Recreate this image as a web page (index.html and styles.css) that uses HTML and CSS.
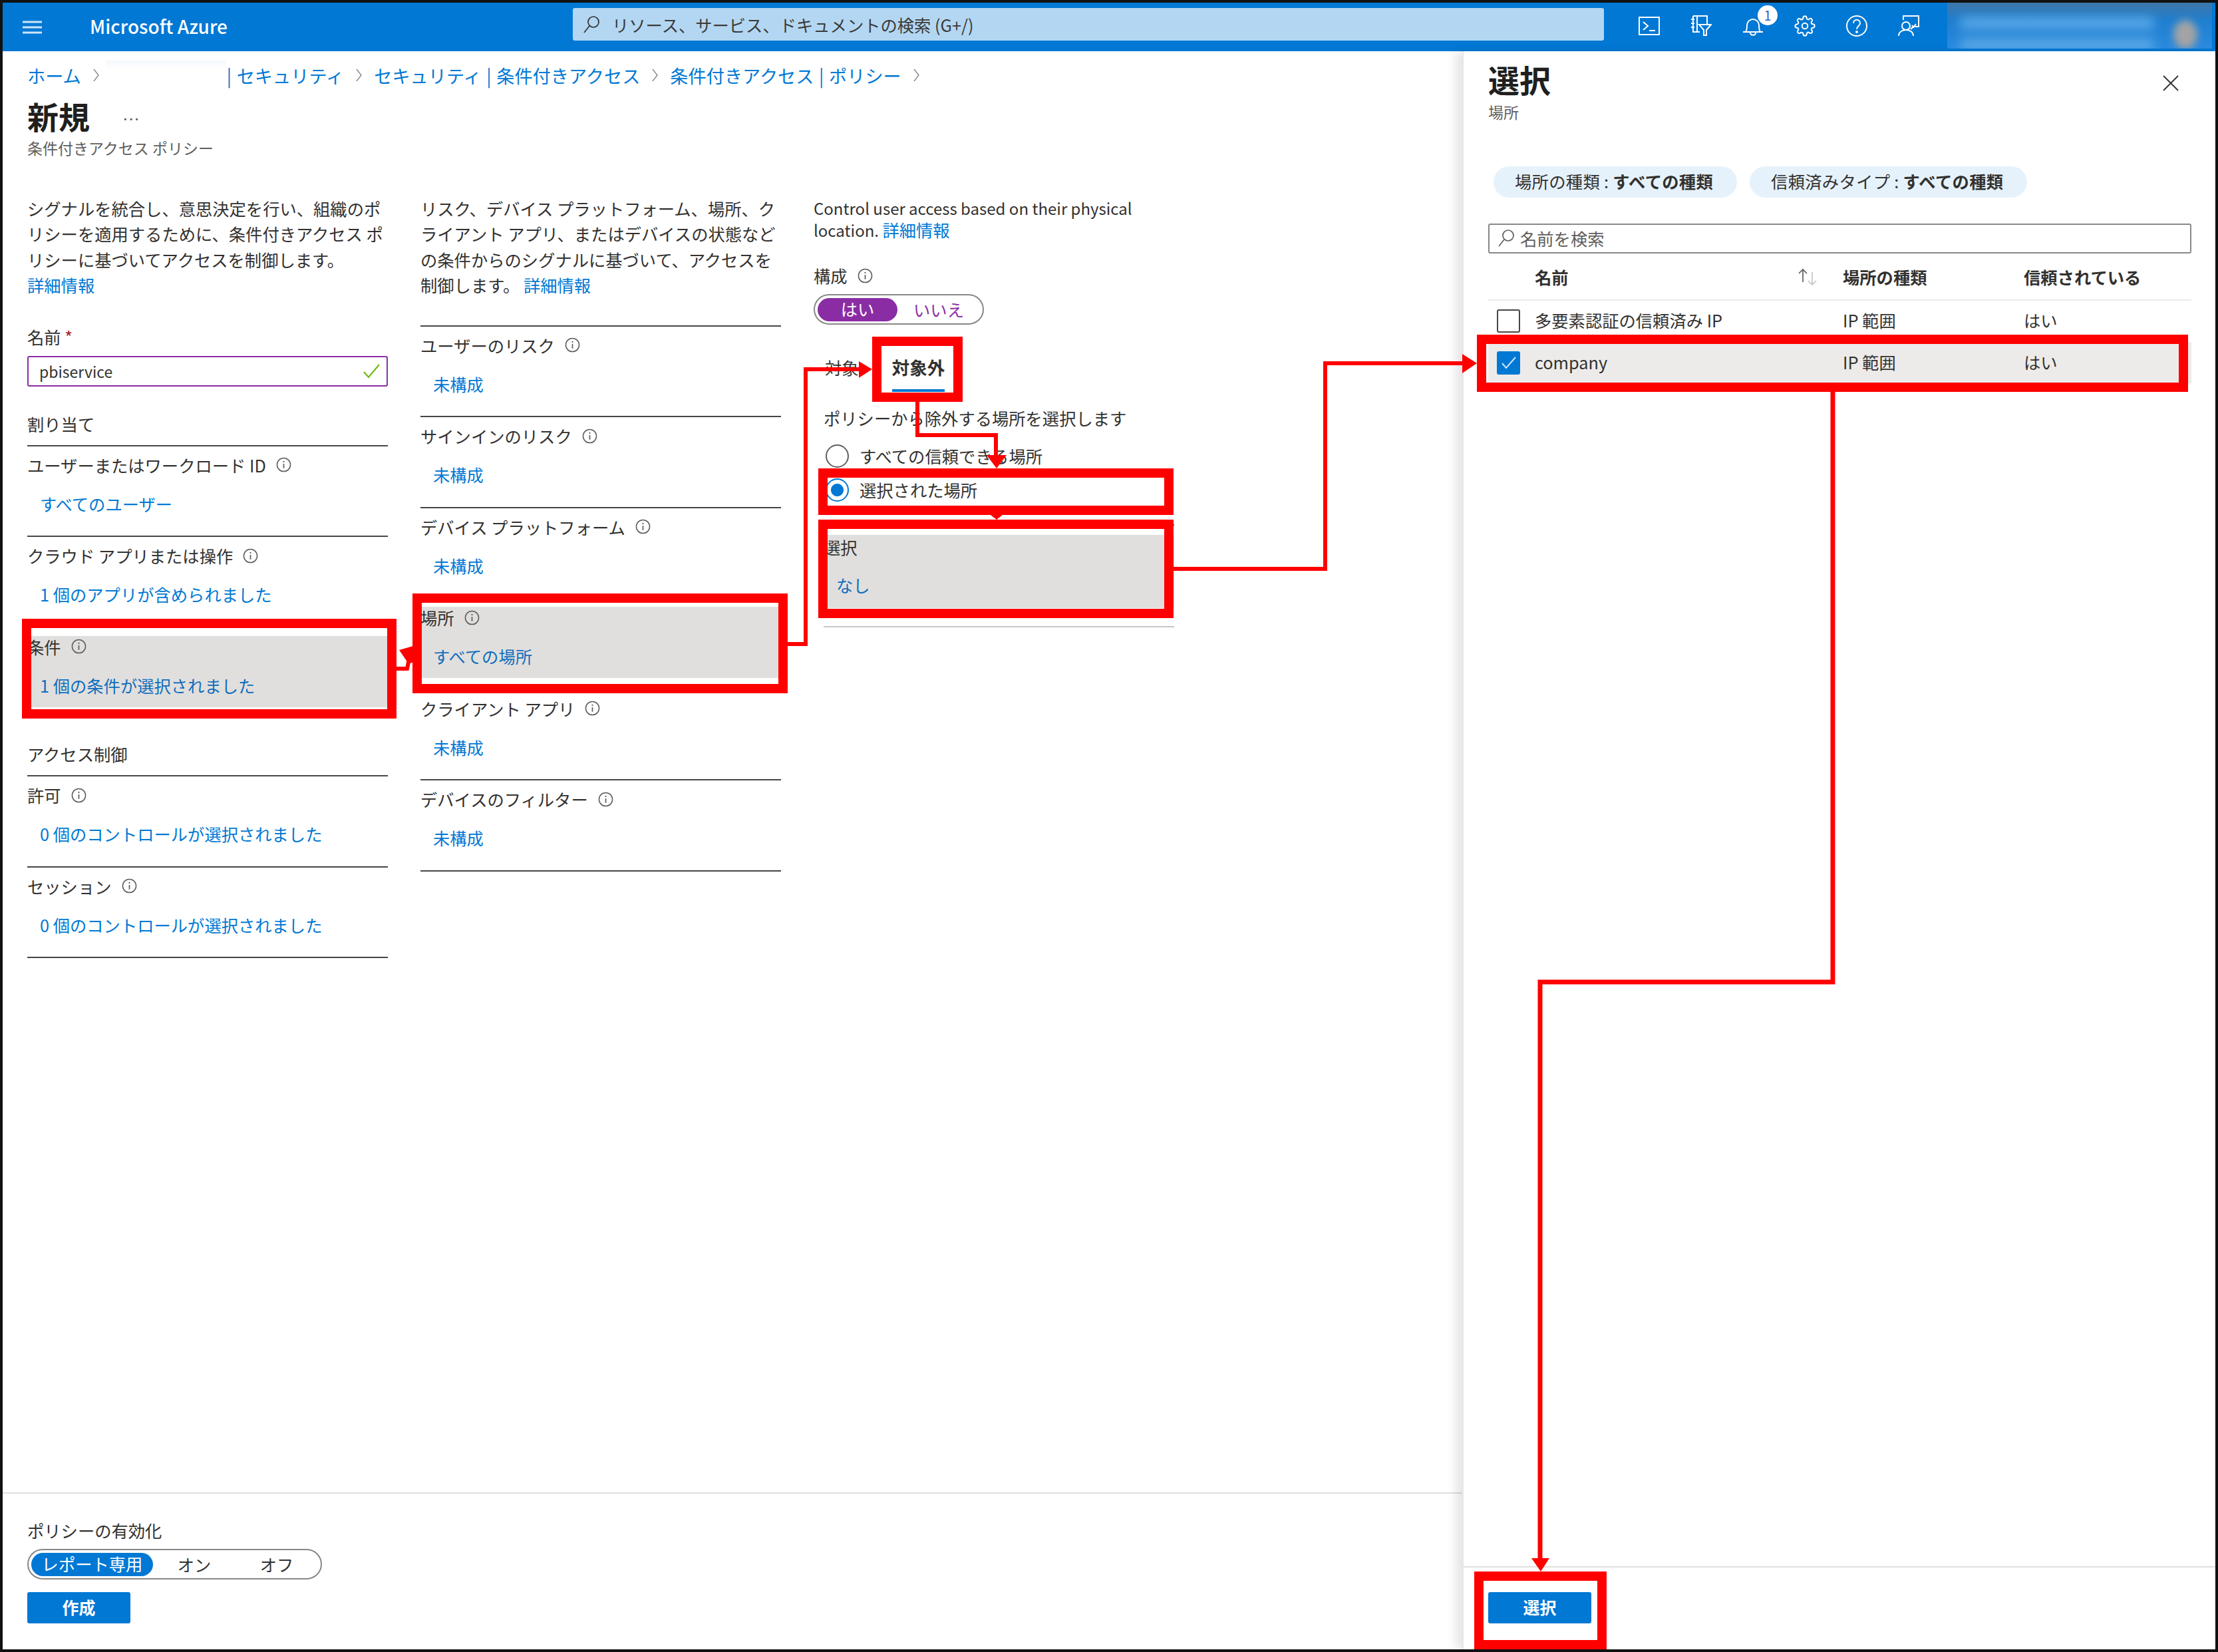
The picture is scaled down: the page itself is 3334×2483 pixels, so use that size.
FILE: index.html
```html
<!DOCTYPE html>
<html lang="ja">
<head>
    <meta charset="UTF-8">
    <title>新規 - Microsoft Azure</title>
    <link rel="stylesheet" href="styles.css">
</head>
<body>
    <svg class="defs" width="0" height="0">
        <symbol id="info" viewBox="0 0 24 24">
            <circle cx="12" cy="12" r="10.5" fill="none" stroke="currentColor" stroke-width="1.6"/>
            <path d="M12 10.5v7" stroke="currentColor" stroke-width="1.8"/>
            <circle cx="12" cy="7.2" r="1.2" fill="currentColor"/>
        </symbol>
        <symbol id="chev" viewBox="0 0 11 22">
            <path d="M2 2l7 9-7 9" fill="none" stroke="currentColor" stroke-width="1.4"/>
        </symbol>
    </svg>

    <div class="frame">
        <!-- Top bar -->
        <header class="topbar">
            <svg class="burger" width="29" height="20" viewBox="0 0 29 20">
                <path d="M0 2h29M0 10h29M0 18h29" stroke="#cfe4f7" stroke-width="3"/>
            </svg>
            <div class="brand">Microsoft Azure</div>
            <div class="global-search">
                <svg width="26" height="28" viewBox="0 0 26 28">
                    <circle cx="16" cy="10" r="8" fill="none" stroke="#323130" stroke-width="1.7"/>
                    <path d="M10 16L2 26" stroke="#323130" stroke-width="1.7"/>
                </svg>
                <span>リソース、サービス、ドキュメントの検索 (G+/)</span>
            </div>
            <div class="top-icons">
                <div class="top-icon">
                    <svg width="32" height="28" viewBox="0 0 32 28" fill="none" stroke="#fff" stroke-width="2">
                        <rect x="1" y="1" width="30" height="26"/>
                        <path d="M7 8l7 6-7 6M16 21h9"/>
                    </svg>
                </div>
                <div class="top-icon">
                    <svg width="32" height="32" viewBox="0 0 32 32" fill="none" stroke="#fff" stroke-width="2">
                        <path d="M4 1h21v12M14 25H4V1M10 1v24M1 6h5M1 12h5M1 18h5"/>
                        <path d="M13 14h18l-7 8v8h-4v-8z"/>
                    </svg>
                </div>
                <div class="top-icon">
                    <svg width="32" height="30" viewBox="0 0 32 30" fill="none" stroke="#fff" stroke-width="2">
                        <path d="M5 24c2-3 2-6 2-10 0-5 4-9 9-9s9 4 9 9c0 4 0 7 2 10zM1 24h30M12 25c0 5 8 5 8 0"/>
                    </svg>
                    <span class="badge">1</span>
                </div>
                <div class="top-icon">
                    <svg width="32" height="32" viewBox="0 0 24 24" fill="none" stroke="#fff" stroke-width="1.5">
                        <circle cx="12" cy="12" r="3.2"/>
                        <path d="M19.4 15a1.65 1.65 0 0 0 .33 1.82l.06.06a2 2 0 0 1 0 2.83 2 2 0 0 1-2.83 0l-.06-.06a1.65 1.65 0 0 0-1.82-.33 1.65 1.65 0 0 0-1 1.51V21a2 2 0 0 1-2 2 2 2 0 0 1-2-2v-.09A1.65 1.65 0 0 0 9 19.4a1.65 1.65 0 0 0-1.82.33l-.06.06a2 2 0 0 1-2.83 0 2 2 0 0 1 0-2.83l.06-.06a1.65 1.65 0 0 0 .33-1.82 1.65 1.65 0 0 0-1.51-1H3a2 2 0 0 1-2-2 2 2 0 0 1 2-2h.09A1.65 1.65 0 0 0 4.6 9a1.65 1.65 0 0 0-.33-1.82l-.06-.06a2 2 0 0 1 0-2.83 2 2 0 0 1 2.83 0l.06.06a1.65 1.65 0 0 0 1.82.33H9a1.65 1.65 0 0 0 1-1.51V3a2 2 0 0 1 2-2 2 2 0 0 1 2 2v.09a1.65 1.65 0 0 0 1 1.51 1.65 1.65 0 0 0 1.82-.33l.06-.06a2 2 0 0 1 2.83 0 2 2 0 0 1 0 2.83l-.06.06a1.65 1.65 0 0 0-.33 1.82V9a1.65 1.65 0 0 0 1.51 1H21a2 2 0 0 1 2 2 2 2 0 0 1-2 2h-.09a1.65 1.65 0 0 0-1.51 1z"/>
                    </svg>
                </div>
                <div class="top-icon">
                    <svg width="32" height="32" viewBox="0 0 32 32" fill="none" stroke="#fff" stroke-width="2">
                        <circle cx="16" cy="16" r="15"/>
                        <path d="M11 12c0-7 10-7 10 0 0 4-5 4-5 9"/>
                        <circle cx="16" cy="25" r="1" fill="#fff"/>
                    </svg>
                </div>
                <div class="top-icon">
                    <svg width="32" height="32" viewBox="0 0 32 32" fill="none" stroke="#fff" stroke-width="2">
                        <path d="M8 7V1h23v16h-8l-4 4"/>
                        <circle cx="12" cy="16" r="6"/>
                        <path d="M1 31c0-12 22-12 22 0M21 15l2 3 4-5"/>
                    </svg>
                </div>
            </div>
            <div class="account">
                <div class="account-line one"></div>
                <div class="account-line two"></div>
                <div class="account-pic"></div>
            </div>
        </header>

        <div class="workspace">
            <!-- Policy form -->
            <main class="policy">
                <div class="policy-body">
                    <nav class="crumbs">
                        <a>ホーム</a>
                        <svg class="chev"><use href="#chev"/></svg>
                        <span class="redacted"></span>
                        <a class="after-redact">| セキュリティ</a>
                        <svg class="chev"><use href="#chev"/></svg>
                        <a>セキュリティ | 条件付きアクセス</a>
                        <svg class="chev"><use href="#chev"/></svg>
                        <a>条件付きアクセス | ポリシー</a>
                        <svg class="chev"><use href="#chev"/></svg>
                    </nav>
                    <div class="title-row">
                        <h1>新規</h1>
                        <span class="more">...</span>
                    </div>
                    <div class="subtitle">条件付きアクセス ポリシー</div>

                    <div class="columns">
                        <section class="col">
                            <p class="intro">シグナルを統合し、意思決定を行い、組織のポ<br>リシーを適用するために、条件付きアクセス ポ<br>リシーに基づいてアクセスを制御します。<br><a>詳細情報</a></p>
                            <div class="name-label">名前 <span class="req">*</span></div>
                            <div class="name-input">
                                <span>pbiservice</span>
                                <svg width="25" height="22" viewBox="0 0 25 22"><path d="M1 12l7 8L24 1" fill="none" stroke="#6bb700" stroke-width="2"/></svg>
                            </div>
                            <h2 class="group-title">割り当て</h2>
                            <div class="rows">
                                <div class="row"><div class="row-in"><div class="row-label">ユーザーまたはワークロード ID <svg class="info"><use href="#info"/></svg></div><a class="row-value">すべてのユーザー</a></div></div>
                                <div class="row"><div class="row-in"><div class="row-label">クラウド アプリまたは操作 <svg class="info"><use href="#info"/></svg></div><a class="row-value">1 個のアプリが含められました</a></div></div>
                                <div class="row"><div class="row-in active"><div class="row-label">条件 <svg class="info"><use href="#info"/></svg></div><a class="row-value">1 個の条件が選択されました</a></div></div>
                            </div>
                            <h2 class="group-title access">アクセス制御</h2>
                            <div class="rows">
                                <div class="row"><div class="row-in"><div class="row-label">許可 <svg class="info"><use href="#info"/></svg></div><a class="row-value">0 個のコントロールが選択されました</a></div></div>
                                <div class="row"><div class="row-in"><div class="row-label">セッション <svg class="info"><use href="#info"/></svg></div><a class="row-value">0 個のコントロールが選択されました</a></div></div>
                            </div>
                        </section>

                        <section class="col">
                            <p class="intro">リスク、デバイス プラットフォーム、場所、ク<br>ライアント アプリ、またはデバイスの状態など<br>の条件からのシグナルに基づいて、アクセスを<br>制御します。 <a>詳細情報</a></p>
                            <div class="rows cond-rows">
                                <div class="row"><div class="row-in"><div class="row-label">ユーザーのリスク <svg class="info"><use href="#info"/></svg></div><a class="row-value">未構成</a></div></div>
                                <div class="row"><div class="row-in"><div class="row-label">サインインのリスク <svg class="info"><use href="#info"/></svg></div><a class="row-value">未構成</a></div></div>
                                <div class="row"><div class="row-in"><div class="row-label">デバイス プラットフォーム <svg class="info"><use href="#info"/></svg></div><a class="row-value">未構成</a></div></div>
                                <div class="row"><div class="row-in active"><div class="row-label">場所 <svg class="info"><use href="#info"/></svg></div><a class="row-value">すべての場所</a></div></div>
                                <div class="row"><div class="row-in"><div class="row-label">クライアント アプリ <svg class="info"><use href="#info"/></svg></div><a class="row-value">未構成</a></div></div>
                                <div class="row"><div class="row-in"><div class="row-label">デバイスのフィルター <svg class="info"><use href="#info"/></svg></div><a class="row-value">未構成</a></div></div>
                            </div>
                        </section>

                        <section class="col col-loc">
                            <p class="loc-intro">Control user access based on their physical<br>location. <a>詳細情報</a></p>
                            <div class="row-label cfg-label">構成 <svg class="info"><use href="#info"/></svg></div>
                            <div class="seg seg-cfg">
                                <span class="seg-on purple">はい</span>
                                <span class="seg-off purple-text">いいえ</span>
                            </div>
                            <div class="tabs">
                                <span class="tab">対象</span>
                                <span class="tab current">対象外</span>
                            </div>
                            <div class="tab-body">
                                <p class="tab-hint">ポリシーから除外する場所を選択します</p>
                                <label class="radio"><span class="dot"></span>すべての信頼できる場所</label>
                                <label class="radio"><span class="dot on"></span>選択された場所</label>
                                <div class="pick">
                                    <div class="pick-in">
                                        <div class="row-label">選択</div>
                                        <a class="row-value">なし</a>
                                    </div>
                                </div>
                            </div>
                        </section>
                    </div>
                </div>

                <footer class="policy-foot">
                    <div class="row-label">ポリシーの有効化</div>
                    <div class="seg seg-enable">
                        <span class="seg-on blue">レポート専用</span>
                        <span class="seg-off">オン</span>
                        <span class="seg-off">オフ</span>
                    </div>
                    <button class="btn">作成</button>
                </footer>
            </main>

            <!-- Select blade -->
            <aside class="blade">
                <div class="blade-body">
                    <div class="blade-head">
                        <div>
                            <h1>選択</h1>
                            <div class="blade-sub">場所</div>
                        </div>
                        <svg class="close" width="24" height="24" viewBox="0 0 24 24"><path d="M1 1l22 22M23 1L1 23" stroke="#323130" stroke-width="1.8"/></svg>
                    </div>
                    <div class="chips">
                        <span class="chip">場所の種類 : <b>すべての種類</b></span>
                        <span class="chip">信頼済みタイプ : <b>すべての種類</b></span>
                    </div>
                    <div class="name-search">
                        <svg width="26" height="28" viewBox="0 0 26 28">
                            <circle cx="16" cy="10" r="8" fill="none" stroke="#605e5c" stroke-width="1.7"/>
                            <path d="M10 16L2 26" stroke="#605e5c" stroke-width="1.7"/>
                        </svg>
                        <span>名前を検索</span>
                    </div>
                    <div class="t-row t-head">
                        <span></span>
                        <span class="t-name">名前
                            <svg width="32" height="28" viewBox="0 0 32 28" fill="none" stroke-width="1.7">
                                <path d="M9 22V3M3 9l6-6 6 6" stroke="#605e5c"/>
                                <path d="M23 7v19M17 20l6 6 6-6" stroke="#c8c6c4"/>
                            </svg>
                        </span>
                        <span>場所の種類</span>
                        <span>信頼されている</span>
                    </div>
                    <div class="t-row">
                        <span class="box"></span>
                        <span>多要素認証の信頼済み IP</span>
                        <span>IP 範囲</span>
                        <span>はい</span>
                    </div>
                    <div class="t-row picked">
                        <span class="box checked">
                            <svg width="24" height="20" viewBox="0 0 24 20"><path d="M2 11l6 7L22 2" fill="none" stroke="#cfe4f7" stroke-width="2"/></svg>
                        </span>
                        <span>company</span>
                        <span>IP 範囲</span>
                        <span>はい</span>
                    </div>
                </div>
                <footer class="blade-foot">
                    <button class="btn">選択</button>
                </footer>
            </aside>
        </div>
    </div>

    <!-- Red callouts drawn over the screenshot -->
    <svg class="callouts" width="3334" height="2483" viewBox="0 0 3334 2483" fill="none" stroke="#f00">
        <g stroke-width="14">
            <rect x="40" y="937" width="549" height="136"/>
            <rect x="627" y="899" width="550" height="136"/>
            <rect x="1318" y="513" width="122" height="84"/>
            <rect x="1237" y="711" width="520" height="56"/>
            <rect x="1237" y="788" width="520" height="134"/>
            <rect x="2227" y="510" width="1055" height="72"/>
            <rect x="2223" y="2369" width="185" height="103"/>
        </g>
        <g stroke-width="6">
            <path d="M596 1005h16l4-20"/>
            <path d="M1184 968h27V555h81"/>
            <path d="M1379 604v50h118v32"/>
            <path d="M1764 855h228V546h208"/>
        </g>
        <path d="M2755 589v887h-440v868" stroke-width="7"/>
        <g fill="#f00" stroke="none">
            <path d="M600 977l21-6v24l-4 2-2-7-2 6z"/>
            <path d="M1291 543l20 12-20 13z"/>
            <path d="M1483 684h30l-15 20z"/>
            <path d="M1489 774h18l-9 7z"/>
            <path d="M2198 532l22 14-22 15z"/>
            <path d="M2302 2342h27l-13 20z"/>
        </g>
    </svg>
</body>
</html>
```

FILE: styles.css
```css
* {
    box-sizing: border-box;
}

body {
    margin: 0;
    position: relative;
    width: 3334px;
    height: 2483px;
    overflow: hidden;
    background: #fff;
    color: #323130;
    font-family: "Noto Sans CJK JP", "Noto Sans", sans-serif;
    font-size: 25.3px;
    line-height: 32px;
}

a {
    color: #0078d4;
}

h1, h2, p {
    margin: 0;
    font-weight: 400;
}

.defs {
    position: absolute;
}

.frame {
    width: 3334px;
    height: 2483px;
    border: 4px solid #111;
    display: flex;
    flex-direction: column;
}

/* Top bar */
.topbar {
    height: 73px;
    flex: none;
    display: flex;
    align-items: center;
    background: #0078d4;
    padding-left: 30px;
}

.brand {
    margin-left: 72px;
    width: 726px;
    flex: none;
    padding-bottom: 3px;
    color: #fff;
    font-size: 28px;
    font-weight: 500;
}

.global-search {
    width: 1550px;
    flex: none;
    height: 49px;
    margin-bottom: 8px;
    display: flex;
    align-items: center;
    gap: 18px;
    padding-left: 15px;
    background: #b3d7f2;
    border-radius: 3px;
    color: #3b3a39;
}

.top-icons {
    margin-left: 29px;
    margin-bottom: 4px;
    display: flex;
    flex: none;
}

.top-icon {
    position: relative;
    width: 78px;
    height: 34px;
    display: flex;
    align-items: center;
    justify-content: center;
}

.badge {
    position: absolute;
    left: 46px;
    top: -14px;
    width: 30px;
    height: 30px;
    border-radius: 50%;
    background: #fff;
    color: #3a5fc0;
    font-size: 20px;
    line-height: 30px;
    text-align: center;
}

.account {
    position: relative;
    width: 398px;
    flex: none;
    height: 69px;
    margin-left: 19px;
    margin-bottom: 4px;
    overflow: hidden;
    background: linear-gradient(#3d76a8, #1f7fd0 40%, #2a8ade);
}

.account-line {
    position: absolute;
    background: #5aa8e6;
    filter: blur(8px);
}

.account-line.one {
    left: 20px;
    top: 22px;
    width: 290px;
    height: 18px;
}

.account-line.two {
    left: 20px;
    top: 54px;
    width: 290px;
    height: 18px;
}

.account-pic {
    position: absolute;
    right: 22px;
    top: 26px;
    width: 36px;
    height: 44px;
    border-radius: 50%;
    background: #a3a3a3;
    filter: blur(6px);
}

/* Main area */
.workspace {
    flex: 1;
    display: flex;
    min-height: 0;
}

.policy {
    width: 2194px;
    display: flex;
    flex-direction: column;
}

.policy-body {
    flex: 1;
    padding: 20px 0 0 37px;
}

.crumbs {
    display: flex;
    align-items: center;
    gap: 17px;
    height: 32px;
    font-size: 27.2px;
    word-spacing: 1.5px;
}

.chev {
    width: 11px;
    height: 22px;
    color: #8a8886;
}

.redacted {
    width: 180px;
    height: 44px;
    margin: 0 -15px 0 -8px;
    background: linear-gradient(#f4f8fc, #fff 30%);
}

.title-row {
    display: flex;
    align-items: center;
    gap: 50px;
    margin-top: 17px;
    height: 56px;
}

.title-row h1, .blade-head h1 {
    font-size: 47px;
    font-weight: 700;
    line-height: 56px;
    color: #201f1e;
}

.more {
    color: #605e5c;
    font-size: 24px;
    letter-spacing: 2px;
    margin-bottom: 6px;
}

.subtitle {
    margin-top: 5px;
    line-height: 30px;
    font-size: 23px;
    color: #605e5c;
}

.columns {
    display: flex;
    gap: 49px;
    margin-top: 57px;
}

.col {
    width: 542px;
}

.intro {
    line-height: 38.4px;
    white-space: nowrap;
}

.name-label {
    margin-top: 42px;
}

.req {
    color: #a4262c;
}

.name-input {
    height: 46px;
    margin-top: 13px;
    padding: 0 10px 0 16px;
    display: flex;
    align-items: center;
    justify-content: space-between;
    border: 2px solid #8a2da5;
    border-radius: 3px;
    font-size: 23px;
}

.group-title {
    margin-top: 40px;
    margin-bottom: 16px;
    font-size: 25.3px;
    line-height: 32px;
}

.group-title.access {
    margin-top: 37px;
}

.rows {
    border-bottom: 2px solid #484644;
}

.cond-rows {
    margin-top: 41px;
}

.row {
    height: 136.5px;
    border-top: 2px solid #484644;
    padding-top: 12px;
}

.row-in {
    height: 107px;
}

.row-in.active {
    background: #e1dfdd;
}

.row-in.active .row-value {
    color: #106ebe;
}

.row-label {
    display: flex;
    align-items: center;
    gap: 15px;
    white-space: nowrap;
}

.info {
    width: 23px;
    height: 23px;
    color: #605e5c;
    flex: none;
}

.row-value {
    display: block;
    margin-top: 26px;
    padding-left: 19px;
}

/* Location column */
.loc-intro {
    margin-top: 2px;
    line-height: 33px;
    font-size: 24px;
    white-space: nowrap;
}

.loc-intro a {
    font-size: 25.3px;
}

.cfg-label {
    margin-top: 36px;
}

.seg {
    display: flex;
    align-items: center;
    margin-top: 12px;
    height: 46px;
    padding: 0 4px;
    border: 2px solid #8a8886;
    border-radius: 23px;
    width: fit-content;
}

.seg-on {
    height: 35px;
    line-height: 33px;
    border-radius: 18px;
    text-align: center;
    color: #fff;
}

.seg-on.purple {
    width: 120px;
    background: #8a2da5;
}

.seg-on.blue {
    width: 183px;
    background: #0078d4;
}

.seg-off {
    width: 124px;
    text-align: center;
}

.purple-text {
    color: #8a2da5;
}

.tabs {
    display: flex;
    gap: 50px;
    margin-top: 46px;
    padding-left: 17px;
}

.tab {
    line-height: 36px;
    padding-bottom: 15px;
    border-bottom: 4px solid transparent;
}

.tab.current {
    font-size: 26.6px;
    font-weight: 700;
    border-bottom-color: #0078d4;
}

.tab-body {
    padding-left: 15px;
}

.tab-hint {
    margin-top: 23px;
}

.radio {
    display: flex;
    align-items: center;
    gap: 16px;
    height: 36px;
    margin-top: 15px;
}

.tab-hint + .radio {
    margin-top: 23px;
}

.dot {
    width: 35px;
    height: 35px;
    border: 2px solid #605e5c;
    border-radius: 50%;
    margin-left: 3px;
    flex: none;
}

.dot.on {
    border-color: #0078d4;
    background: radial-gradient(#0078d4 0 9px, #fff 10px);
}

.pick {
    margin-top: 34px;
    height: 155px;
    padding-top: 14px;
    border-top: 2px solid #484644;
    border-bottom: 2px solid #c8c6c4;
}

.pick-in {
    height: 110px;
    padding-top: 2px;
    background: #e1dfdd;
}

.pick-in .row-value {
    margin-top: 25px;
    color: #106ebe;
}

/* Footer of the form */
.policy-foot {
    height: 236px;
    flex: none;
    padding: 39px 0 0 37px;
    border-top: 2px solid #e1dfdd;
}

.btn {
    width: 155px;
    height: 47px;
    padding: 0 0 4px;
    border: none;
    border-radius: 3px;
    background: #0078d4;
    color: #fff;
    font-family: inherit;
    font-size: 25px;
    font-weight: 700;
}

.policy-foot .btn {
    margin-top: 19px;
    display: block;
}

/* Blade */
.blade {
    flex: 1;
    display: flex;
    flex-direction: column;
    box-shadow: -10px 0 14px rgba(0, 0, 0, 0.1);
    border-left: 2px solid #e6e6e6;
    background: #fff;
}

.blade-body {
    flex: 1;
    padding: 14px 36px 0 37px;
}

.blade-head {
    display: flex;
    justify-content: space-between;
}

.close {
    margin: 22px 19px 0 0;
}

.blade-sub {
    margin-top: 6px;
    line-height: 30px;
    font-size: 23px;
    color: #605e5c;
}

.chips {
    display: flex;
    gap: 19px;
    margin: 67px 0 0 8px;
}

.chip {
    height: 47px;
    line-height: 45px;
    padding: 0 36px 0 32px;
    border-radius: 24px;
    background: #e6f2fb;
    white-space: nowrap;
    letter-spacing: 0.3px;
}

.chip b {
    font-weight: 700;
}

.name-search {
    height: 45px;
    margin-top: 39px;
    padding: 0 0 2px 12px;
    display: flex;
    align-items: center;
    gap: 8px;
    border: 2px solid #8a8886;
    border-radius: 3px;
    color: #605e5c;
}

.t-row {
    display: grid;
    grid-template-columns: 70px 463px 272px 1fr;
    align-items: center;
    height: 62px;
    padding-bottom: 3px;
}

.t-row .box {
    margin-top: 3px;
}

.t-head {
    height: 71px;
    padding-bottom: 0;
    border-bottom: 2px solid #edebe9;
    font-weight: 700;
}

.t-head + .t-row {
    padding-bottom: 5px;
}

.t-name {
    display: flex;
    align-items: center;
    justify-content: space-between;
    padding-right: 37px;
}

.picked {
    background: #edebe9;
}

.box {
    width: 35px;
    height: 35px;
    margin-left: 13px;
    border: 2px solid #484644;
    border-radius: 3px;
}

.box.checked {
    display: flex;
    align-items: center;
    justify-content: center;
    border-color: #0078d4;
    background: #0078d4;
}

.blade-foot {
    height: 125px;
    flex: none;
    padding: 37px 0 0 37px;
    border-top: 2px solid #e1dfdd;
}

/* Red callouts */
.callouts {
    position: absolute;
    left: 0;
    top: 0;
}
```
